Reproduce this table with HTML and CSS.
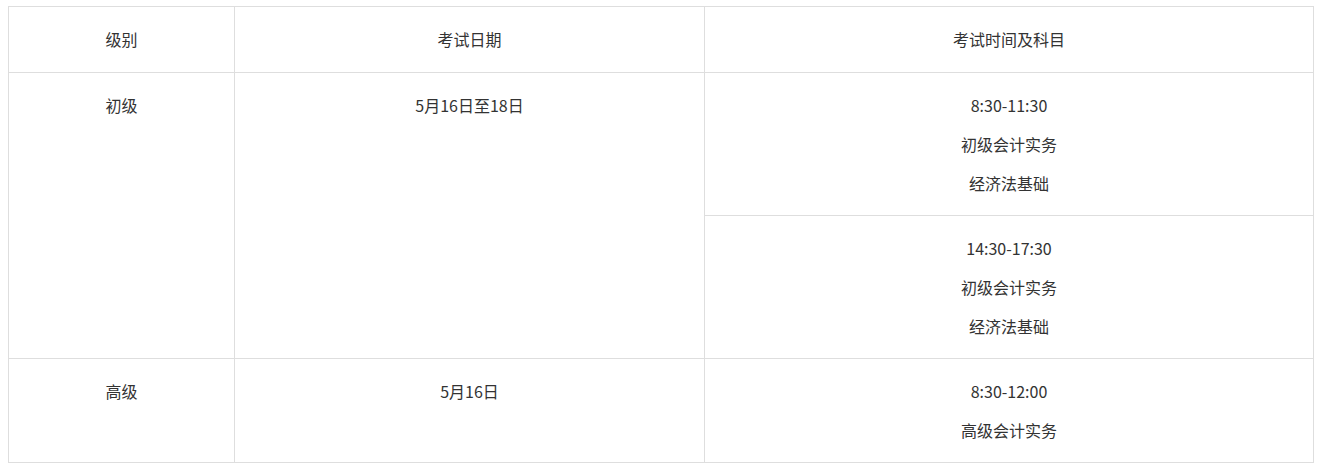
FILE: index.html
```html
<!DOCTYPE html>
<html lang="zh-CN">
<head>
<meta charset="utf-8">
<title>考试时间</title>
<link rel="stylesheet" href="styles.css">
</head>
<body>
<table class="exam">
  <colgroup>
    <col class="c1">
    <col class="c2">
    <col class="c3">
  </colgroup>
  <thead>
    <tr>
      <th><p>级别</p></th>
      <th><p>考试日期</p></th>
      <th><p>考试时间及科目</p></th>
    </tr>
  </thead>
  <tbody>
    <tr>
      <td rowspan="2"><p>初级</p></td>
      <td rowspan="2"><p>5月16日至18日</p></td>
      <td><p>8:30-11:30</p><p>初级会计实务</p><p>经济法基础</p></td>
    </tr>
    <tr>
      <td><p>14:30-17:30</p><p>初级会计实务</p><p>经济法基础</p></td>
    </tr>
    <tr>
      <td><p>高级</p></td>
      <td><p>5月16日</p></td>
      <td><p>8:30-12:00</p><p>高级会计实务</p></td>
    </tr>
  </tbody>
</table>
</body>
</html>
```
FILE: styles.css
```css
html, body {
  margin: 0;
  padding: 0;
  background: #fff;
}
body {
  padding: 6px 0 0 8px;
  font-family: "Microsoft YaHei", "Noto Sans CJK SC", "Noto Sans", sans-serif;
  font-size: 16px;
  color: #333;
}
.exam {
  border-collapse: collapse;
  table-layout: fixed;
  width: 1305px;
}
.exam .c1 { width: 226px; }
.exam .c2 { width: 470px; }
.exam .c3 { width: 609px; }
.exam th,
.exam td {
  border: 1px solid #dedede;
  padding: 13px 10px 12px;
  text-align: center;
  vertical-align: top;
  font-weight: normal;
}
.exam th {
  padding-bottom: 13px;
}
.exam p {
  margin: 0;
  line-height: 39px;
}
```
